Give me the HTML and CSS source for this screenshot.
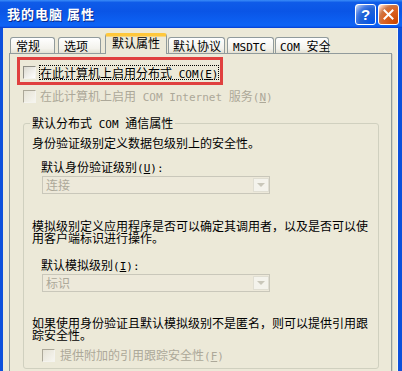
FILE: index.html
```html
<!DOCTYPE html>
<html lang="zh-CN">
<head>
<meta charset="utf-8">
<title>我的电脑 属性</title>
<link rel="stylesheet" href="styles.css">
</head>
<body>
<div class="win">
  <header class="titlebar">
    <span class="title">我的电脑 属性</span>
    <div class="tbtns">
      <span class="tb help">?</span>
      <span class="tb close">
        <svg width="11" height="11" viewBox="0 0 11 11"><path d="M1.5 1.5 L9.5 9.5 M9.5 1.5 L1.5 9.5" stroke="#fff" stroke-width="2" stroke-linecap="square"/></svg>
      </span>
    </div>
  </header>
  <main class="body">
    <nav class="tabs">
      <span class="tab t1">常规</span>
      <span class="tab t2">选项</span>
      <span class="tab t3 sel">默认属性</span>
      <span class="tab t4">默认协议</span>
      <span class="tab t5"><span class="l">MSDTC</span></span>
      <span class="tab t6"><span class="l">COM </span>安全</span>
    </nav>
    <section class="panel">
      <div class="hl">
        <div class="row">
          <span class="cb"></span>
          <span class="focus">在此计算机上启用分布式<span class="l"> COM(<u>E</u>)</span></span>
        </div>
      </div>
      <div class="row r2 dis">
        <span class="cb dcb"></span>
        <span class="lbl">在此计算机上启用<span class="l"> COM Internet </span>服务<span class="l">(<u>N</u>)</span></span>
      </div>
      <fieldset class="grp">
        <legend>默认分布式<span class="l"> COM </span>通信属性</legend>
        <p class="txt p1">身份验证级别定义数据包级别上的安全性。</p>
        <p class="txt lab l1">默认身份验证级别<span class="l">(<u>U</u>):</span></p>
        <div class="dd d1"><span>连接</span><span class="ddbtn"><i class="tri"></i></span></div>
        <div class="txt p2">
          <span class="ln">模拟级别定义应用程序是否可以确定其调用者，以及是否可以使</span>
          <span class="ln">用客户端标识进行操作。</span>
        </div>
        <p class="txt lab l2">默认模拟级别<span class="l">(<u>I</u>):</span></p>
        <div class="dd d2"><span>标识</span><span class="ddbtn"><i class="tri"></i></span></div>
        <div class="txt p3">
          <span class="ln">如果使用身份验证且默认模拟级别不是匿名，则可以提供引用跟</span>
          <span class="ln">踪安全性。</span>
        </div>
        <div class="row r3 dis">
          <span class="cb dcb"></span>
          <span class="lbl">提供附加的引用跟踪安全性<span class="l">(<u>F</u>)</span></span>
        </div>
      </fieldset>
    </section>
  </main>
</div>
</body>
</html>
```
FILE: styles.css
```css
html, body {
  margin: 0;
  width: 402px;
  height: 371px;
  overflow: hidden;
  background: #ECE9D8;
  font: 12px/12px "Noto Sans CJK SC", sans-serif;
  color: #000;
}

.win {
  width: 402px;
  height: 371px;
  display: flex;
  flex-direction: column;
}

.titlebar {
  height: 28px;
  flex: none;
  box-sizing: border-box;
  display: flex;
  align-items: center;
  justify-content: space-between;
  padding: 0 3px 0 7px;
  background: linear-gradient(180deg, #3a8cf8 0, #0f5be8 9%, #0a55e6 40%, #0d62f4 86%, #0d62f4 92%, #0a58ec 95%, #0846d8 97%, #0846d8 100%);
}

.title {
  color: #fff;
  font-weight: 700;
  font-size: 13px;
  letter-spacing: 1px;
  text-shadow: 1px 1px 0 #0a2a8a;
}

.tbtns {
  display: flex;
  gap: 2px;
  margin-top: 1px;
}

.tb {
  width: 21px;
  height: 21px;
  box-sizing: border-box;
  border: 1px solid #fff;
  border-radius: 3px;
  display: flex;
  align-items: center;
  justify-content: center;
}

.help {
  background: radial-gradient(circle at 90% 90%, #0054e9 0%, #2263d5 55%, #4479e4 70%, #a3bbec 90%, #fff 100%);
  color: #fff;
  font: 700 15px/15px "Liberation Sans", sans-serif;
}

.close {
  background: radial-gradient(circle at 90% 90%, #cc4600 0%, #dc6527 55%, #cd7546 70%, #ffccb2 90%, #fff 100%);
}

.body {
  flex: 1;
  box-sizing: border-box;
  border-left: 3px solid #0c4fdc;
  border-right: 4px solid #0c4fdc;
  box-shadow: inset -1px 0 0 #f7f6f0;
  padding: 5px 6px 0;
  overflow: hidden;
}

.tabs {
  display: flex;
  align-items: flex-end;
  height: 20px;
  padding-left: 1px;
  position: relative;
  z-index: 1;
}

.tab {
  box-sizing: border-box;
  height: 16px;
  border: 1px solid #919b9c;
  border-bottom: none;
  border-radius: 3px 3px 0 0;
  background: linear-gradient(#ffffff, #f3f2ec 70%, #e3e0d2);
  padding: 2px 0 0 5px;
  white-space: nowrap;
}

.t1 { width: 45px; margin-right: 3px; }
.t2 { width: 43px; margin-right: 4px; }
.t3 { width: 62px; margin-right: 1px; }
.t4 { width: 57px; margin-right: 2px; padding-left: 4px; }
.t5 { width: 47px; margin-right: 1px; }
.t6 { width: 54px; padding-left: 4px; }

.tab.sel {
  height: 21px;
  margin-bottom: -1px;
  border-top: 3px solid #ffc83c;
  box-shadow: inset 0 1px 0 #f7d681;
  background: #ECE9D8;
  padding: 1px 0 0 6px;
}

.l {
  font-family: "DejaVu Sans Mono", monospace;
  font-size: 11px;
  line-height: 0;
}

.panel {
  border: 1px solid #919b9c;
  box-shadow: 1px 1px 0 #d6d3c4;
  padding: 3px 0 20px 7px;
}

.hl {
  width: 206px;
  height: 28px;
  box-sizing: border-box;
  border: 3px solid #e0403f;
  padding: 5px 0 0 3px;
}

.row {
  display: flex;
  align-items: center;
}

.cb {
  width: 13px;
  height: 13px;
  flex: none;
  box-sizing: border-box;
  border: 1px solid;
  border-color: #8f8e86 #f4f3ee #f4f3ee #8f8e86;
  background: linear-gradient(135deg, #dcdad0, #ffffff);
}

.dcb {
  border-color: #aca899 #f4f3ee #f4f3ee #aca899;
  background: linear-gradient(135deg, #e6e3d6, #f6f5ef);
}

.focus {
  margin-left: 3px;
  border: 1px dotted #000;
  line-height: 13px;
  white-space: nowrap;
}

.dis { color: #aca899; }

.lbl {
  margin-left: 4px;
  white-space: nowrap;
}

.r2 {
  height: 14px;
  margin: 4px 0 0 6px;
}

.grp {
  margin: 14px 0 0 6px;
  width: 356px;
  min-width: 0;
  box-sizing: border-box;
  border: 1px solid #d0d0bf;
  border-radius: 3px;
  padding: 0 0 6px 8px;
}

.grp legend {
  padding: 0 2px;
  margin-left: -2px;
  line-height: 12px;
  white-space: nowrap;
}

.txt {
  margin: 0;
  white-space: nowrap;
}

.ln {
  display: block;
  height: 12px;
  line-height: 12px;
}

.p1 { margin-top: 8px; }
.l1 { margin: 12px 0 0 9px; }
.p2 { margin-top: 26px; }
.l2 { margin: 15px 0 0 9px; }
.p3 { margin-top: 25px; }

.dd {
  width: 228px;
  height: 18px;
  box-sizing: border-box;
  border: 1px solid #c9c7ba;
  background: #ede9da;
  color: #aca899;
  display: flex;
  align-items: center;
  justify-content: space-between;
  padding-left: 3px;
}

.d1 { margin: 3px 0 0 10px; }
.d2 { margin: 3px 0 0 10px; }

.ddbtn {
  width: 16px;
  height: 14px;
  box-sizing: border-box;
  border: 1px solid #e0ded2;
  background: #f4f3ec;
  display: flex;
  align-items: center;
  justify-content: center;
}

.tri {
  width: 0;
  height: 0;
  border-left: 4px solid transparent;
  border-right: 4px solid transparent;
  border-top: 4px solid #c9c7ba;
}

.r3 {
  height: 14px;
  margin: 7px 0 0 10px;
}

.r3 .lbl { margin-left: 5px; }
```
